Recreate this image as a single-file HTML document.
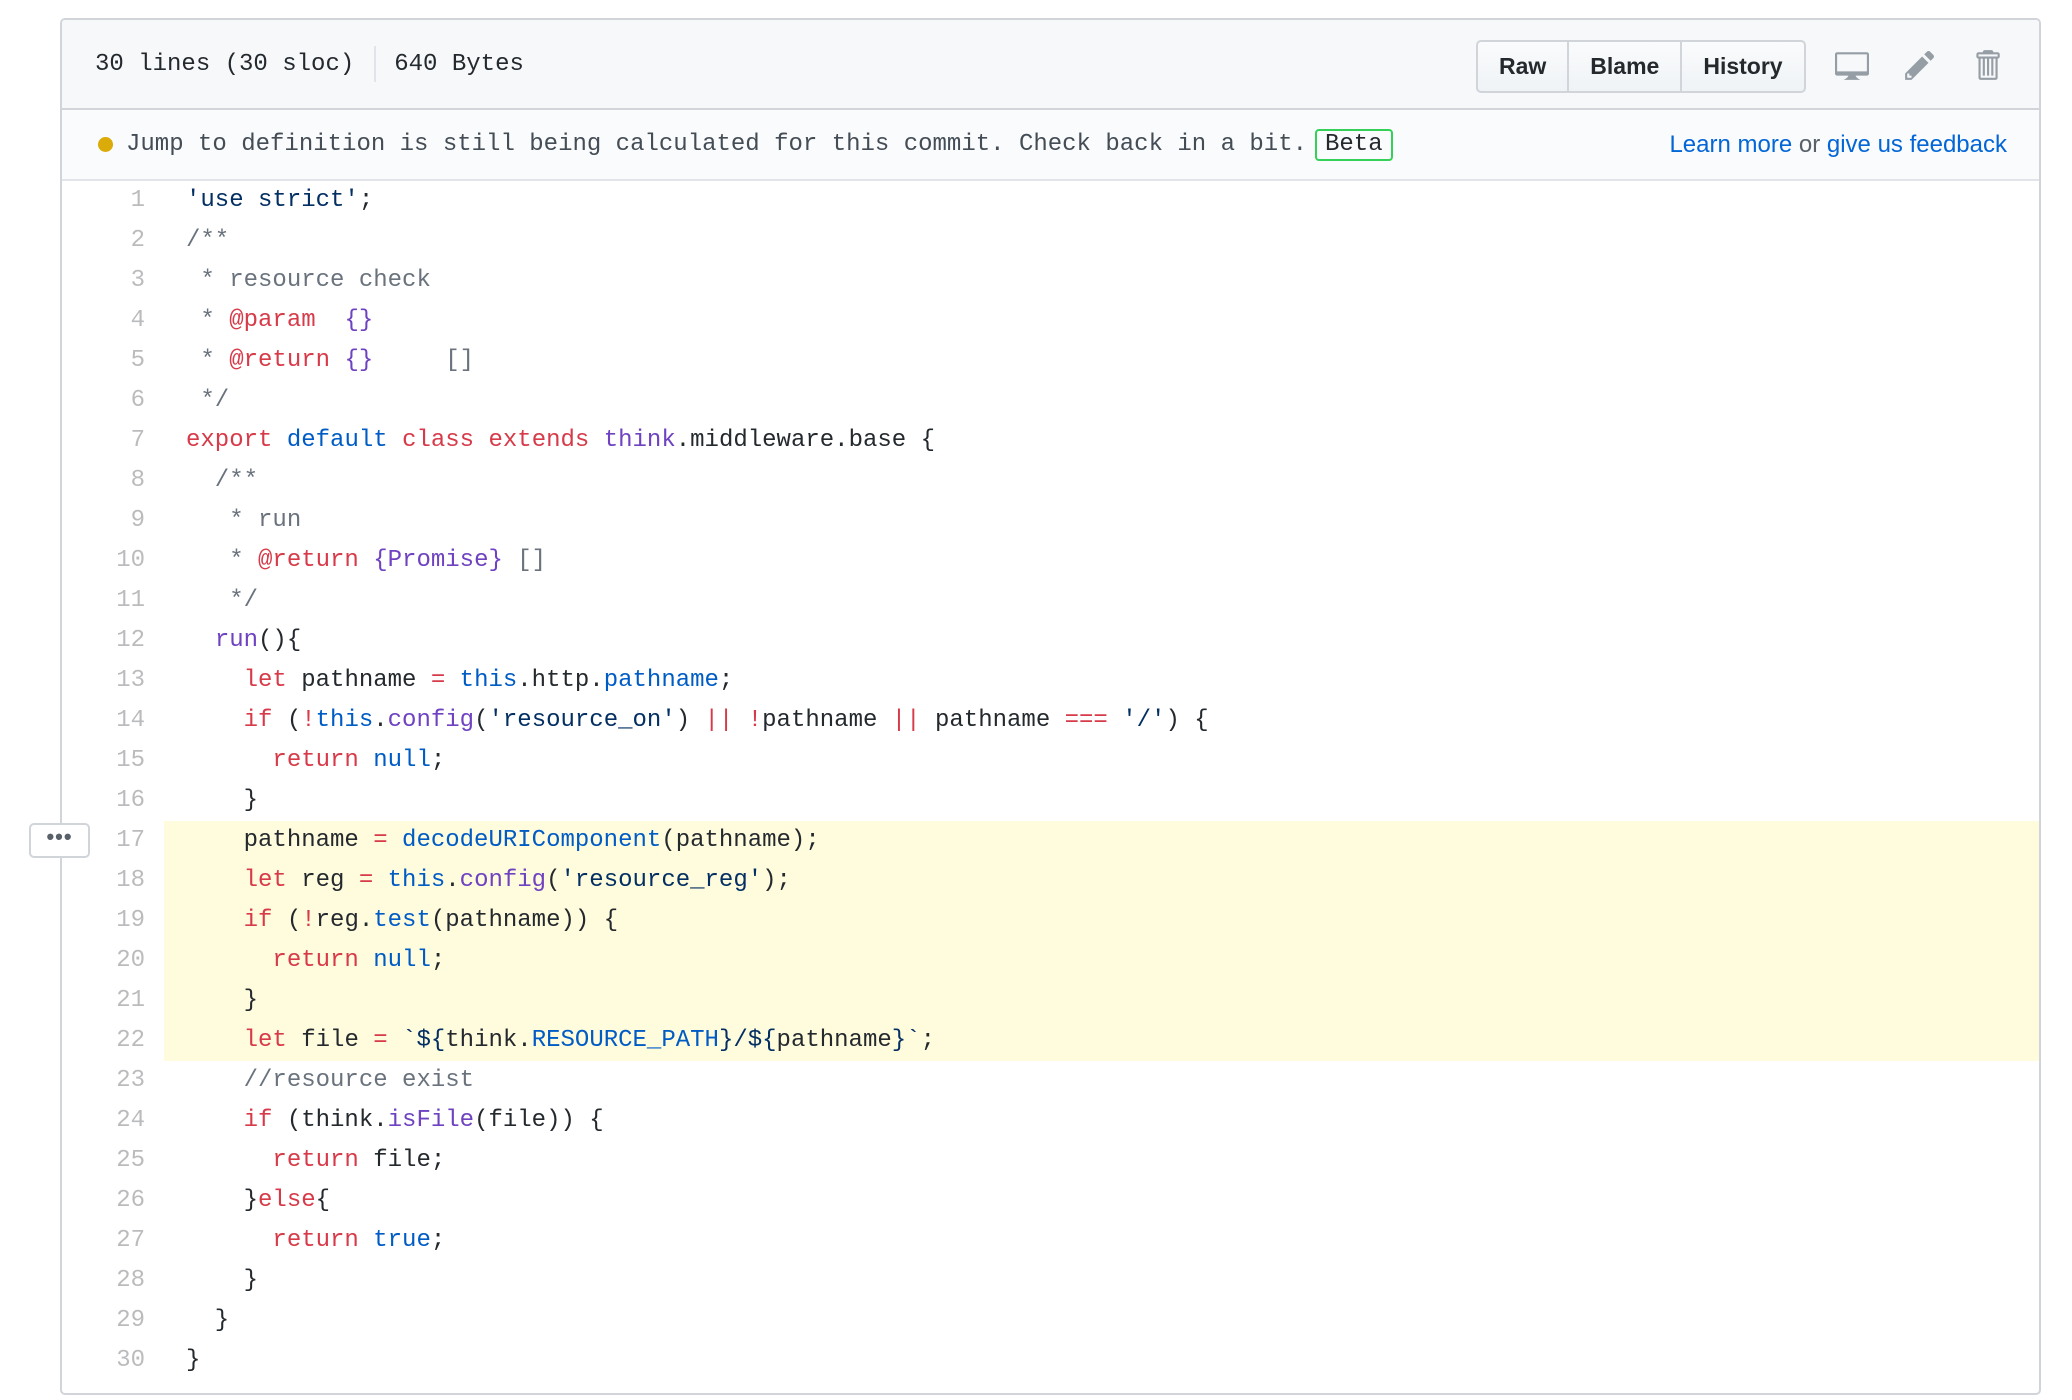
<!DOCTYPE html>
<html><head><meta charset="utf-8"><style>
*{box-sizing:border-box;margin:0;padding:0}
body{width:2072px;height:1400px;background:#fff;position:relative;overflow:hidden;font-family:"Liberation Sans",sans-serif}
.box{position:absolute;left:60px;top:18px;width:1981px;height:1377px;border:2px solid #d1d5da;border-radius:5px;overflow:hidden}
.hdr{position:absolute;left:0;top:0;right:0;height:90px;background:#f6f8fa;border-bottom:2px solid #d1d5da}
.mono{font-family:"Liberation Mono",monospace}
.hdr .info{position:absolute;left:33px;top:0;line-height:90px;font-size:24px;color:#24292e}
.sep{display:inline-block;width:2px;height:36px;background:#e1e4e8;vertical-align:middle;margin:0 18px 0 20px}
.btns{position:absolute;left:1414px;top:20px;height:53px;display:flex;border:2px solid #d1d5da;border-radius:5px;background:linear-gradient(#fafbfc,#eff3f6)}
.btns div{font-weight:bold;font-size:23px;color:#24292e;line-height:49px;padding:0 21px}
.btns div+div{border-left:2px solid #d1d5da}
.note{position:absolute;left:0;top:90px;right:0;height:71px;background:#fafbfc;border-bottom:2px solid #e1e4e8}
.dot{position:absolute;left:36px;top:27px;width:15px;height:15px;border-radius:50%;background:#dbab09}
.note .t{position:absolute;left:64px;top:0;line-height:70px;font-size:24px;color:#444d56}
.beta{display:inline-block;border:2px solid #34d058;color:#24292e;border-radius:4px;line-height:28px;padding:0 8px;margin-left:8px}
.note .r{position:absolute;right:32px;top:0;line-height:70px;font-size:24px;color:#586069}
.note .r a{color:#0366d6;text-decoration:none}
.code{position:absolute;left:0;top:161px;right:0}
.ln{height:40px;line-height:40px;font-family:"Liberation Mono",monospace;font-size:24px;white-space:pre;position:relative;color:#24292e}
.ln .n{position:absolute;left:0;width:83px;text-align:right;color:rgba(27,31,35,.3)}
.ln .c{position:absolute;left:124px}
.hl{background:#fffbdd;margin-left:102px}
.hl .n{left:-102px}.hl .c{left:22px}
.k{color:#d73a49}.e{color:#6f42c1}.cn{color:#005cc5}.s{color:#032f62}.cm{color:#6a737d}
.ell{position:absolute;left:29px;top:823px;width:61px;height:35px;border:2px solid #d1d5da;border-radius:5px;background:#fff;text-align:center;line-height:24px;font-size:22px;color:#586069;letter-spacing:1px;font-weight:bold}
</style></head><body>
<div class="box">
<div class="hdr"><div class="info mono">30 lines (30 sloc)<span class="sep"></span>640 Bytes</div>
<div class="btns"><div>Raw</div><div>Blame</div><div>History</div></div>
<svg style="position:absolute;left:1773px;top:28px" width="34" height="34" viewBox="0 0 16 16"><path fill="#959da5" d="M15 2H1c-.55 0-1 .45-1 1v9c0 .55.45 1 1 1h5.34c-.25.61-.86 1.39-2.34 2h8c-1.48-.61-2.09-1.39-2.34-2H15c.55 0 1-.45 1-1V3c0-.55-.45-1-1-1zm0 9H1V3h14v8z"/></svg>
<svg style="position:absolute;left:1843px;top:28px" width="30" height="34" viewBox="0 0 14 16"><path fill="#959da5" d="M0 12v3h3l8-8-3-3-8 8zm3 2H1v-2h1v1h1v1zm10.3-9.3L12 6 9 3l1.3-1.3a.996.996 0 011.41 0l1.59 1.59c.39.39.39 1.02 0 1.41z"/></svg>
<svg style="position:absolute;left:1912px;top:28px" width="26" height="34" viewBox="0 0 12 16"><path fill="#959da5" d="M11 2H9c0-.55-.45-1-1-1H5c-.55 0-1 .45-1 1H2c-.55 0-1 .45-1 1v1c0 .55.45 1 1 1v9c0 .55.45 1 1 1h7c.55 0 1-.45 1-1V5c.55 0 1-.45 1-1V3c0-.55-.45-1-1-1zm-1 12H3V5h1v8h1V5h1v8h1V5h1v8h1V5h1v9zm1-10H2V3h9v1z"/></svg>
</div>
<div class="note"><div class="dot"></div><div class="t mono">Jump to definition is still being calculated for this commit. Check back in a bit.<span class="beta">Beta</span></div>
<div class="r"><a>Learn more</a> or <a>give us feedback</a></div></div>
<div class="code">
<div class="ln"><span class="n">1</span><span class="c"><span class="s">'use strict'</span>;</span></div>
<div class="ln"><span class="n">2</span><span class="c cm">/**</span></div>
<div class="ln"><span class="n">3</span><span class="c cm"> * resource check</span></div>
<div class="ln"><span class="n">4</span><span class="c cm"> * <span class="k">@param</span>  <span class="e">{}</span></span></div>
<div class="ln"><span class="n">5</span><span class="c cm"> * <span class="k">@return</span> <span class="e">{}</span>     []</span></div>
<div class="ln"><span class="n">6</span><span class="c cm"> */</span></div>
<div class="ln"><span class="n">7</span><span class="c"><span class="k">export</span> <span class="cn">default</span> <span class="k">class</span> <span class="k">extends</span> <span class="e">think</span>.middleware.base {</span></div>
<div class="ln"><span class="n">8</span><span class="c cm">  /**</span></div>
<div class="ln"><span class="n">9</span><span class="c cm">   * run</span></div>
<div class="ln"><span class="n">10</span><span class="c cm">   * <span class="k">@return</span> <span class="e">{Promise}</span> []</span></div>
<div class="ln"><span class="n">11</span><span class="c cm">   */</span></div>
<div class="ln"><span class="n">12</span><span class="c">  <span class="e">run</span>(){</span></div>
<div class="ln"><span class="n">13</span><span class="c">    <span class="k">let</span> pathname <span class="k">=</span> <span class="cn">this</span>.http.<span class="cn">pathname</span>;</span></div>
<div class="ln"><span class="n">14</span><span class="c">    <span class="k">if</span> (<span class="k">!</span><span class="cn">this</span>.<span class="e">config</span>(<span class="s">'resource_on'</span>) <span class="k">||</span> <span class="k">!</span>pathname <span class="k">||</span> pathname <span class="k">===</span> <span class="s">'/'</span>) {</span></div>
<div class="ln"><span class="n">15</span><span class="c">      <span class="k">return</span> <span class="cn">null</span>;</span></div>
<div class="ln"><span class="n">16</span><span class="c">    }</span></div>
<div class="ln hl"><span class="n">17</span><span class="c">    pathname <span class="k">=</span> <span class="cn">decodeURIComponent</span>(pathname);</span></div>
<div class="ln hl"><span class="n">18</span><span class="c">    <span class="k">let</span> reg <span class="k">=</span> <span class="cn">this</span>.<span class="e">config</span>(<span class="s">'resource_reg'</span>);</span></div>
<div class="ln hl"><span class="n">19</span><span class="c">    <span class="k">if</span> (<span class="k">!</span>reg.<span class="cn">test</span>(pathname)) {</span></div>
<div class="ln hl"><span class="n">20</span><span class="c">      <span class="k">return</span> <span class="cn">null</span>;</span></div>
<div class="ln hl"><span class="n">21</span><span class="c">    }</span></div>
<div class="ln hl"><span class="n">22</span><span class="c">    <span class="k">let</span> file <span class="k">=</span> <span class="s">`${</span>think.<span class="cn">RESOURCE_PATH</span><span class="s">}/${</span>pathname<span class="s">}`</span>;</span></div>
<div class="ln"><span class="n">23</span><span class="c cm">    //resource exist</span></div>
<div class="ln"><span class="n">24</span><span class="c">    <span class="k">if</span> (think.<span class="e">isFile</span>(file)) {</span></div>
<div class="ln"><span class="n">25</span><span class="c">      <span class="k">return</span> file;</span></div>
<div class="ln"><span class="n">26</span><span class="c">    }<span class="k">else</span>{</span></div>
<div class="ln"><span class="n">27</span><span class="c">      <span class="k">return</span> <span class="cn">true</span>;</span></div>
<div class="ln"><span class="n">28</span><span class="c">    }</span></div>
<div class="ln"><span class="n">29</span><span class="c">  }</span></div>
<div class="ln"><span class="n">30</span><span class="c">}</span></div>
</div>
</div>
<div class="ell">•••</div>
</body></html>
